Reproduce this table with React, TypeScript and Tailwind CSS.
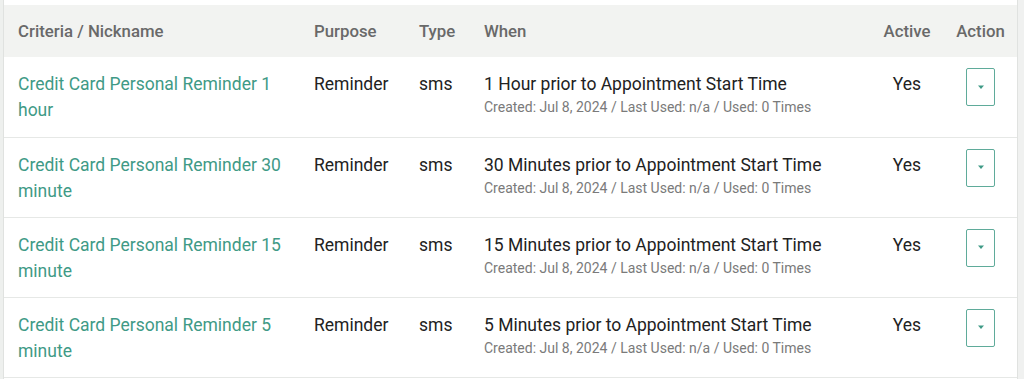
import React from "react";

type Rule = {
  name: string;
  when: string;
};

const rules: Rule[] = [
  { name: "Credit Card Personal Reminder 1 hour", when: "1 Hour prior to Appointment Start Time" },
  { name: "Credit Card Personal Reminder 30 minute", when: "30 Minutes prior to Appointment Start Time" },
  { name: "Credit Card Personal Reminder 15 minute", when: "15 Minutes prior to Appointment Start Time" },
  { name: "Credit Card Personal Reminder 5 minute", when: "5 Minutes prior to Appointment Start Time" },
];

function ActionButton() {
  return (
    <button className="inline-flex h-[38px] w-[29px] items-center justify-center rounded-[2px] border border-[#5fab9a] bg-white">
      <svg width="8" height="5" viewBox="0 0 8 5">
        <path d="M1 0.5 L7 0.5 L4 4 Z" fill="#3f9a86" />
      </svg>
    </button>
  );
}

export default function App() {
  return (
    <div
      className="flex h-[379px] w-[1024px] bg-white text-[17.5px] text-[#222]"
      style={{ fontFamily: "Roboto, 'Noto Sans', sans-serif" }}
    >
      <div className="w-[3px] shrink-0 bg-[#eef0ee]" />
      <div className="flex-1 border-x border-[#e0e2e0] pt-[5px]">
        <table className="w-full table-fixed border-collapse">
          <colgroup>
            <col className="w-[296px]" />
            <col className="w-[105px]" />
            <col className="w-[65px]" />
            <col className="w-[400px]" />
            <col className="w-[74px]" />
            <col />
          </colgroup>
          <thead>
            <tr className="h-[52px] bg-[#f2f3f1] text-left text-[16.8px] text-[#696969]">
              <th className="pl-[14px] pt-[2px] font-medium">Criteria / Nickname</th>
              <th className="pl-[14px] pt-[2px] font-medium">Purpose</th>
              <th className="pl-[14px] pt-[2px] font-medium">Type</th>
              <th className="pl-[14px] pt-[2px] font-medium">When</th>
              <th className="pt-[2px] text-center font-medium">Active</th>
              <th className="pt-[2px] text-center font-medium">Action</th>
            </tr>
          </thead>
          <tbody>
            {rules.map((r) => (
              <tr key={r.name} className="h-[80px] border-b border-[#e6e8e6] align-top">
                <td className="pl-[14px] pr-[14px] pt-[14px] leading-[26px] text-[#3f9a86]">{r.name}</td>
                <td className="pl-[14px] pt-[14px] leading-[26px]">Reminder</td>
                <td className="pl-[14px] pt-[14px] leading-[26px]">sms</td>
                <td className="pl-[14px] pt-[14px]">
                  <div className="leading-[26px]">{r.when}</div>
                  <div className="text-[14px] leading-[20px] text-[#7a7a7a]">
                    Created: Jul 8, 2024 / Last Used: n/a / Used: 0 Times
                  </div>
                </td>
                <td className="pt-[14px] text-center leading-[26px]">Yes</td>
                <td className="pt-[11px] text-center">
                  <ActionButton />
                </td>
              </tr>
            ))}
          </tbody>
        </table>
      </div>
      <div className="w-[6px] shrink-0 bg-[#f0f1f0]" />
    </div>
  );
}
